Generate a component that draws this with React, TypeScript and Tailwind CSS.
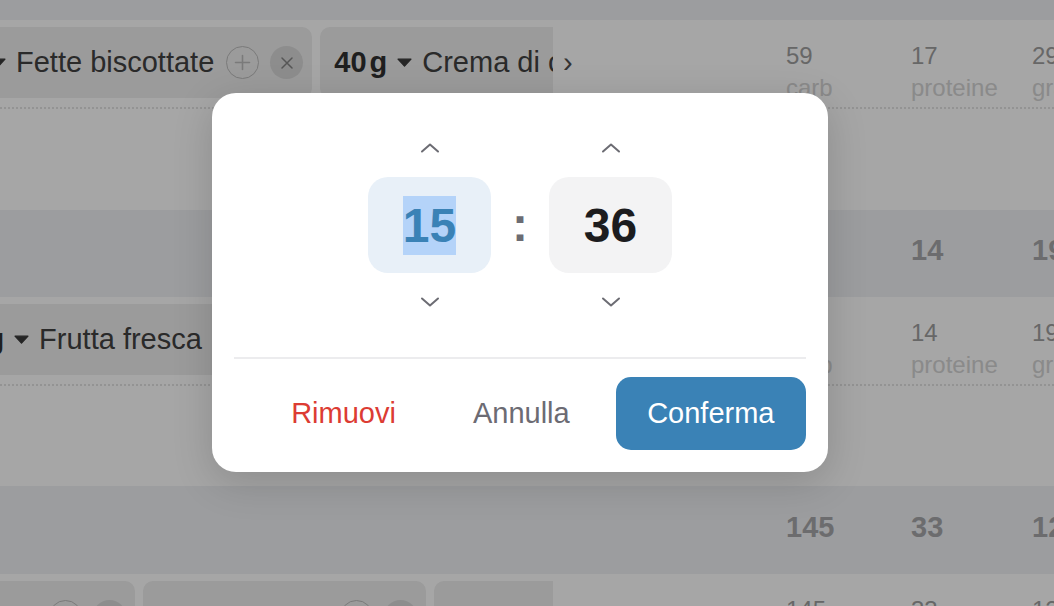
import type { ReactNode } from "react";

// Shared column template for meal rows and total bands
const GRID = "grid grid-cols-[553px_233px_125px_121px_122px]";

function Caret() {
  return (
    <svg width="15" height="9" viewBox="0 0 15 9" className="shrink-0">
      <path d="M1 1.2h13L7.5 8.2z" fill="#393939" stroke="#393939" strokeWidth="1.2" strokeLinejoin="round" />
    </svg>
  );
}

function PlusButton() {
  return (
    <div className="flex h-[33px] w-[33px] shrink-0 items-center justify-center rounded-full border-[1.5px] border-[#bcbcbc]">
      <svg width="17" height="17" viewBox="0 0 17 17">
        <path d="M8.5 1.5v14M1.5 8.5h14" stroke="#bcbcbc" strokeWidth="1.6" strokeLinecap="round" />
      </svg>
    </div>
  );
}

function RemoveButton() {
  return (
    <div className="flex h-[33px] w-[33px] shrink-0 items-center justify-center rounded-full bg-[#d9d9d9]">
      <svg width="12" height="12" viewBox="0 0 12 12">
        <path d="M1 1l10 10M11 1L1 11" stroke="#858585" strokeWidth="1.5" strokeLinecap="round" />
      </svg>
    </div>
  );
}

function Chip({ qty, name }: { qty: string; name: string }) {
  return (
    <div className="flex h-[71px] shrink-0 items-center gap-[10px] whitespace-nowrap rounded-[10px] bg-[#eeeeee] pl-[14px] pr-[9px] text-[29px] text-[#414141]">
      <span className="font-bold text-[#303030]">
        {qty}
        <span className="ml-[3px]">g</span>
      </span>
      <Caret />
      <span>{name}</span>
      <div className="ml-[2px] flex items-center gap-[11px]">
        <PlusButton />
        <RemoveButton />
      </div>
    </div>
  );
}

function Macro({ value, label }: { value: string; label: string }) {
  return (
    <div className="pt-[20px] text-[24px] leading-[32px]">
      <div className="text-[#9f9f9f]">{value}</div>
      <div className="text-[#d4d4d4]">{label}</div>
    </div>
  );
}

function MealRow({
  height,
  offset,
  chips,
  macros,
}: {
  height: string;
  offset: string;
  chips: ReactNode;
  macros: [string, string, string];
}) {
  return (
    <div className={`${height} bg-white`}>
      <div className={`${GRID} h-[89px] border-b-2 border-dotted border-[#e2e2e2]`}>
        <div className="overflow-hidden pt-[7px]">
          <div className={`flex gap-[8px] ${offset}`}>{chips}</div>
        </div>
        <div className="mt-[7px] flex h-[71px] items-center pl-[10px] text-[29px] text-[#4f4f4f]">›</div>
        <Macro value={macros[0]} label="carb" />
        <Macro value={macros[1]} label="proteine" />
        <Macro value={macros[2]} label="grassi" />
      </div>
    </div>
  );
}

function TotalBand({ height, values }: { height: string; values: [string, string, string] }) {
  return (
    <div className={`${GRID} ${height} items-center bg-[#f0f2f5] pb-[5px] text-[29px] font-bold text-[#a6a7aa]`}>
      <div />
      <div />
      {values.map((v, i) => (
        <div key={i}>{v}</div>
      ))}
    </div>
  );
}

function Chevron({ down }: { down?: boolean }) {
  return (
    <svg width="20" height="10" viewBox="0 0 20 10" className={down ? "rotate-180" : ""}>
      <polyline points="2,8.5 10,1.5 18,8.5" fill="none" stroke="#6c6c73" strokeWidth="2" strokeLinecap="round" strokeLinejoin="round" />
    </svg>
  );
}

function Spinner({ value, active }: { value: string; active?: boolean }) {
  return (
    <div className="flex flex-col items-center gap-6">
      <Chevron />
      <div
        className={`flex h-[96px] w-[123px] items-center justify-center rounded-[20px] text-[48px] font-bold leading-[59px] ${
          active ? "bg-[#e8f0f8] text-[#3a82b6]" : "bg-[#f3f3f4] text-[#1c1c1e]"
        }`}
      >
        <span className={active ? "bg-[#b4d3f9]" : ""}>{value}</span>
      </div>
      <Chevron down />
    </div>
  );
}

export default function App() {
  return (
    <div className="relative h-[606px] w-[1054px] overflow-hidden bg-white font-['Liberation_Sans',Arial,sans-serif]">
      <div className="h-[20px] bg-[#f0f2f5]" />

      <MealRow
        height="h-[190px]"
        offset="-ml-[86px]"
        macros={["59", "17", "29"]}
        chips={
          <>
            <Chip qty="30" name="Fette biscottate" />
            <Chip qty="40" name="Crema di cacao" />
          </>
        }
      />
      <TotalBand height="h-[87px]" values={["52", "14", "19"]} />

      <MealRow
        height="h-[189px]"
        offset="-ml-[79px]"
        macros={["38", "14", "19"]}
        chips={
          <>
            <Chip qty="150" name="Frutta fresca" />
            <Chip qty="125" name="Yogurt greco" />
          </>
        }
      />
      <TotalBand height="h-[88px]" values={["145", "33", "12"]} />

      <MealRow
        height="h-[190px]"
        offset="-ml-[146px]"
        macros={["145", "33", "12"]}
        chips={
          <>
            <Chip qty="200" name="Latte" />
            <Chip qty="120" name="Pane" />
            <Chip qty="10" name="Miele" />
          </>
        }
      />

      {/* Dimmed backdrop with time picker dialog */}
      <div className="absolute inset-0 bg-black/35">
        <div className="absolute left-[212px] top-[93px] w-[616px] rounded-[24px] bg-white px-[22px] pb-[22px] pt-[50px] shadow-[0_10px_40px_rgba(0,0,0,0.16)]">
          <div className="flex items-center justify-center gap-[21px]">
            <Spinner value="15" active />
            <span className="w-[16px] text-center text-[48px] font-bold leading-[58px] text-[#6c6c73]">:</span>
            <Spinner value="36" />
          </div>

          <div className="mt-[50px] h-[2px] bg-[#ececee]" />

          <div className="mt-[18px] flex h-[73px] justify-end gap-[15px] text-[29px]">
            <button className="px-[31px] text-[#dc3c33]">Rimuovi</button>
            <button className="px-[31px] text-[#6c6b73]">Annulla</button>
            <button className="rounded-[15px] bg-[#3a82b6] px-[31.5px] text-white">Conferma</button>
          </div>
        </div>
      </div>
    </div>
  );
}
